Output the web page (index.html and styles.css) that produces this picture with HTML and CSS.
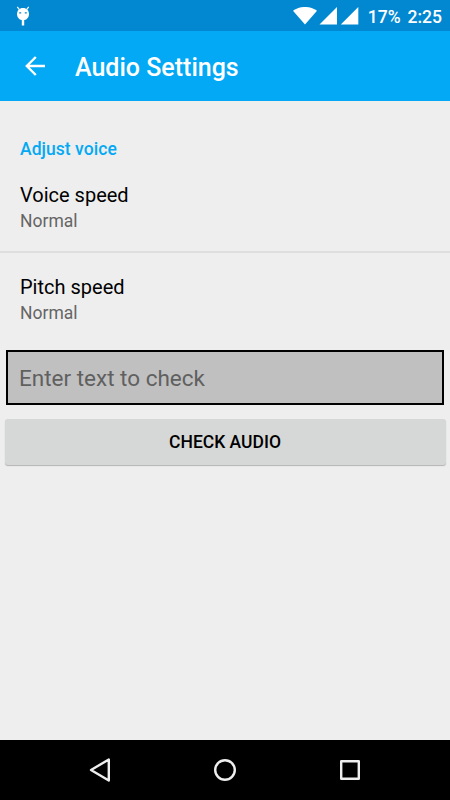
FILE: index.html
```
<!DOCTYPE html>
<html lang="en">
<head>
    <meta charset="UTF-8">
    <meta name="viewport" content="width=device-width, initial-scale=1.0">
    <title>Audio Settings</title>
    <link rel="stylesheet" href="styles.css">
</head>
<body>
    <div class="status-bar">
        <svg class="debug-icon" width="14" height="20" viewBox="0 0 14 20">
            <path d="M1.3 .8 3.2 3.4M12.7 .8 10.8 3.4" stroke="#fff" stroke-width="1.2"/>
            <path d="M7 2C10.6 2 13 4.6 13 8s-2.4 6.2-6 6.2S1 11.4 1 8 3.4 2 7 2z" fill="#fff"/>
            <path d="M5.8 14h2.4v5.5H5.8z" fill="#fff"/>
            <path d="M3.2 6.2h2v1.2h-2zM8.8 6.2h2v1.2h-2z" fill="#0288d1"/>
        </svg>
        <div class="status-right">
            <svg width="66" height="18" viewBox="0 0 66 18" fill="#fff">
                <path d="M0 3.8C7-1.3 17-1.3 24 3.8L12 17.5z"/>
                <path d="M44 0v17.5H26.5z"/>
                <path d="M65.3 0v17.5H47.8z"/>
            </svg>
            <span class="battery">17%</span>
            <span class="clock">2:25</span>
        </div>
    </div>

    <header class="app-bar">
        <svg class="back" width="20" height="20" viewBox="0 0 20 20" fill="none" stroke="#fff" stroke-width="2.4">
            <path d="M20 10H2M10.8 1 1.8 10l9 9"/>
        </svg>
        <h1>Audio Settings</h1>
    </header>

    <main class="content">
        <h2 class="category">Adjust voice</h2>
        <div class="preference">
            <div class="title">Voice speed</div>
            <div class="summary">Normal</div>
        </div>
        <div class="preference">
            <div class="title">Pitch speed</div>
            <div class="summary">Normal</div>
        </div>
        <input class="check-text" type="text" placeholder="Enter text to check">
        <button class="check-btn">CHECK AUDIO</button>
    </main>

    <nav class="nav-bar">
        <svg width="24" height="26" viewBox="0 0 24 26"><path d="M20.8 2.5v21L3 13z"/></svg>
        <svg width="24" height="26" viewBox="0 0 24 26"><circle cx="12" cy="13" r="9.8"/></svg>
        <svg width="24" height="26" viewBox="0 0 24 26"><path d="M3.2 4.2h17.6v17.6H3.2z"/></svg>
    </nav>
</body>
</html>
```
FILE: styles.css
```
* {
    box-sizing: border-box;
}

body {
    margin: 0;
    height: 100vh;
    display: flex;
    flex-direction: column;
    font-family: Roboto, sans-serif;
    background-color: #eee;
    color: #000;
    overflow: hidden;
}

.status-bar {
    height: 31px;
    padding: 0 8px 0 16px;
    display: flex;
    align-items: center;
    justify-content: space-between;
    background-color: #0288d1;
    color: #fff;
}

.status-right {
    display: flex;
    align-items: center;
    font-size: 17.5px;
    font-weight: 500;
    line-height: 20px;
}

.battery {
    margin-left: 9px;
    padding-top: 2px;
}

.clock {
    margin-left: 7px;
    padding-top: 2px;
}

.app-bar {
    height: 70px;
    padding: 0 25px;
    display: flex;
    align-items: center;
    background-color: #03a9f4;
    color: #fff;
}

.app-bar h1 {
    margin: 0 0 0 30px;
    padding-top: 4px;
    font-size: 25px;
    font-weight: 500;
    line-height: 30px;
}

.content {
    flex: 1;
    display: flex;
    flex-direction: column;
}

.category {
    margin: 38px 20px 14px;
    font-size: 17.5px;
    font-weight: 500;
    line-height: 20px;
    letter-spacing: 0.05px;
    color: #03a9f4;
}

.preference {
    height: 78px;
    padding: 9px 20px 0;
}

.preference + .preference {
    height: 98px;
    padding-top: 21px;
    border-top: 2px solid #dedede;
}

.title {
    font-size: 20px;
    line-height: 26px;
}

.summary {
    font-size: 17.5px;
    line-height: 26px;
    color: #656565;
}

.check-text {
    height: 55px;
    margin: 1px 6px 0;
    padding: 1px 11px 0;
    border: 2px solid #000;
    border-radius: 0;
    background-color: #c0c0c0;
    font: 22.5px Roboto, sans-serif;
}

.check-text::placeholder {
    color: #606060;
}

.check-btn {
    height: 46px;
    margin: 14px 4.5px 0;
    border: none;
    border-radius: 3px;
    background-color: #d6d8d7;
    box-shadow: 0 1px 1px rgba(0, 0, 0, 0.25);
    font: 500 17.5px Roboto, sans-serif;
    color: #000;
}

.nav-bar {
    height: 60px;
    display: flex;
    align-items: center;
    justify-content: center;
    gap: 101px;
    background-color: #000;
}

.nav-bar svg {
    fill: none;
    stroke: #eee;
    stroke-width: 2.4;
    stroke-linejoin: round;
}
```
